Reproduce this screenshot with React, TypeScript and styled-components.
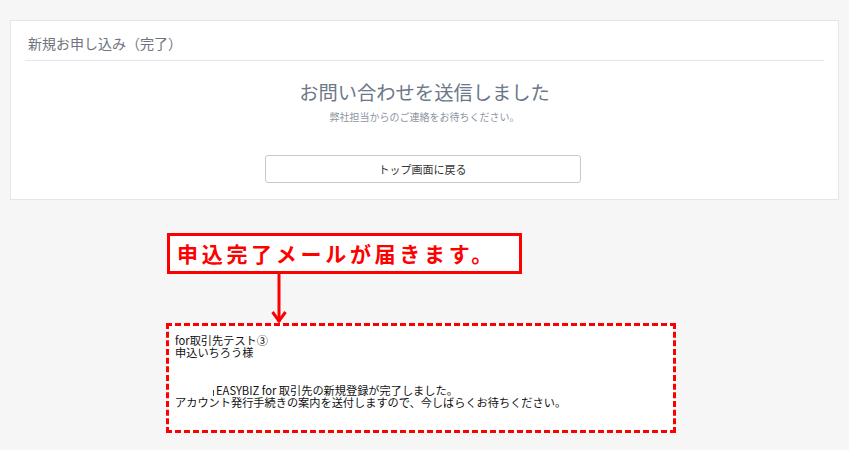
import { FC } from "react"
import styled, { createGlobalStyle } from 'styled-components';

const GlobalStyle = createGlobalStyle`
    html, body {
        margin: 0;
        padding: 0;
        background: #f6f6f6;
    }
    body {
        font-family: "Noto Sans CJK JP", "Noto Sans", sans-serif;
        width: 849px;
        height: 450px;
        overflow: hidden;
    }
`

const Arrow: FC = () => (
    <ArrowSvg width="16" height="49" viewBox="0 0 16 49">
        <line x1="8" y1="0" x2="8" y2="48" stroke="#ff0000" strokeWidth="3" />
        <polyline points="1.5,38 8,47 14.5,38" fill="none" stroke="#ff0000" strokeWidth="3" />
    </ArrowSvg>
)

export default function App() {
    return (
        <Page>
            <GlobalStyle />
            <Card>
                <CardHeader>新規お申し込み（完了）</CardHeader>
                <CardBody>
                    <Title>お問い合わせを送信しました</Title>
                    <Subtitle>弊社担当からのご連絡をお待ちください。</Subtitle>
                    <BackButton type="button">トップ画面に戻る</BackButton>
                </CardBody>
            </Card>
            <Annotation>
                <Callout>申込完了メールが届きます。</Callout>
                <Arrow />
                <MailBox>
                    <MailLine>for取引先テスト③</MailLine>
                    <MailLine>申込いちろう様</MailLine>
                    <MailLine />
                    <MailLine />
                    <MailLine indent={38}><Tick />EASYBIZ for 取引先の新規登録が完了しました。</MailLine>
                    <MailLine>アカウント発行手続きの案内を送付しますので、今しばらくお待ちください。</MailLine>
                </MailBox>
            </Annotation>
        </Page>
    )
}

const Page = styled.div`
    padding: 20px 10px 0;
`

const Card = styled.div`
    background: #fff;
    border: 1px solid #e3e6ea;
    padding: 0 14px 16px;
    height: 180px;
    box-sizing: border-box;
`

const CardHeader = styled.div`
    font-size: 14px;
    line-height: 20px;
    color: #6f7480;
    padding: 12px 0 7px 3px;
    border-bottom: 1px solid #e3e6ea;
`

const CardBody = styled.div`
    display: flex;
    flex-direction: column;
    align-items: center;
`

const Title = styled.div`
    margin-top: 18px;
    font-size: 19.3px;
    line-height: 26px;
    color: #6c788a;
`

const Subtitle = styled.div`
    margin-top: 5px;
    font-size: 10px;
    line-height: 14px;
    color: #8d95a2;
`

const BackButton = styled.button`
    margin: 31px 4px 0 0;
    width: 316px;
    height: 28px;
    background: #fff;
    border: 1px solid #c9c9c9;
    border-radius: 3px;
    font-family: "Noto Sans CJK JP", sans-serif;
    font-size: 11px;
    color: #333;
    padding: 0;
`

const Annotation = styled.div`
    display: flex;
    flex-direction: column;
    align-items: flex-start;
    margin: 33px 0 0 156px;
`

const Callout = styled.div`
    margin-left: 1px;
    width: 355px;
    height: 41px;
    box-sizing: border-box;
    border: 3px solid #ff0000;
    background: #fff;
    padding: 0 0 0 7px;
    font-size: 21px;
    font-weight: 700;
    line-height: 35px;
    letter-spacing: 3.7px;
    color: #ff0000;
    white-space: nowrap;
`

const ArrowSvg = styled.svg`
    display: block;
    margin-left: 105px;
`

const MailBox = styled.div`
    width: 510px;
    height: 110px;
    box-sizing: border-box;
    border: 3px dashed #ff0000;
    background: #fff;
    padding: 8px 6px;
`

const MailLine = styled.div<{ indent?: number }>`
    font-size: 11.2px;
    line-height: 12.4px;
    height: 12.4px;
    color: #111;
    white-space: nowrap;
    padding-left: ${p => p.indent || 0}px;
`

const Tick = styled.span`
    display: inline-block;
    width: 1px;
    height: 6px;
    background: #444;
    margin-right: 2px;
    vertical-align: -1px;
`
